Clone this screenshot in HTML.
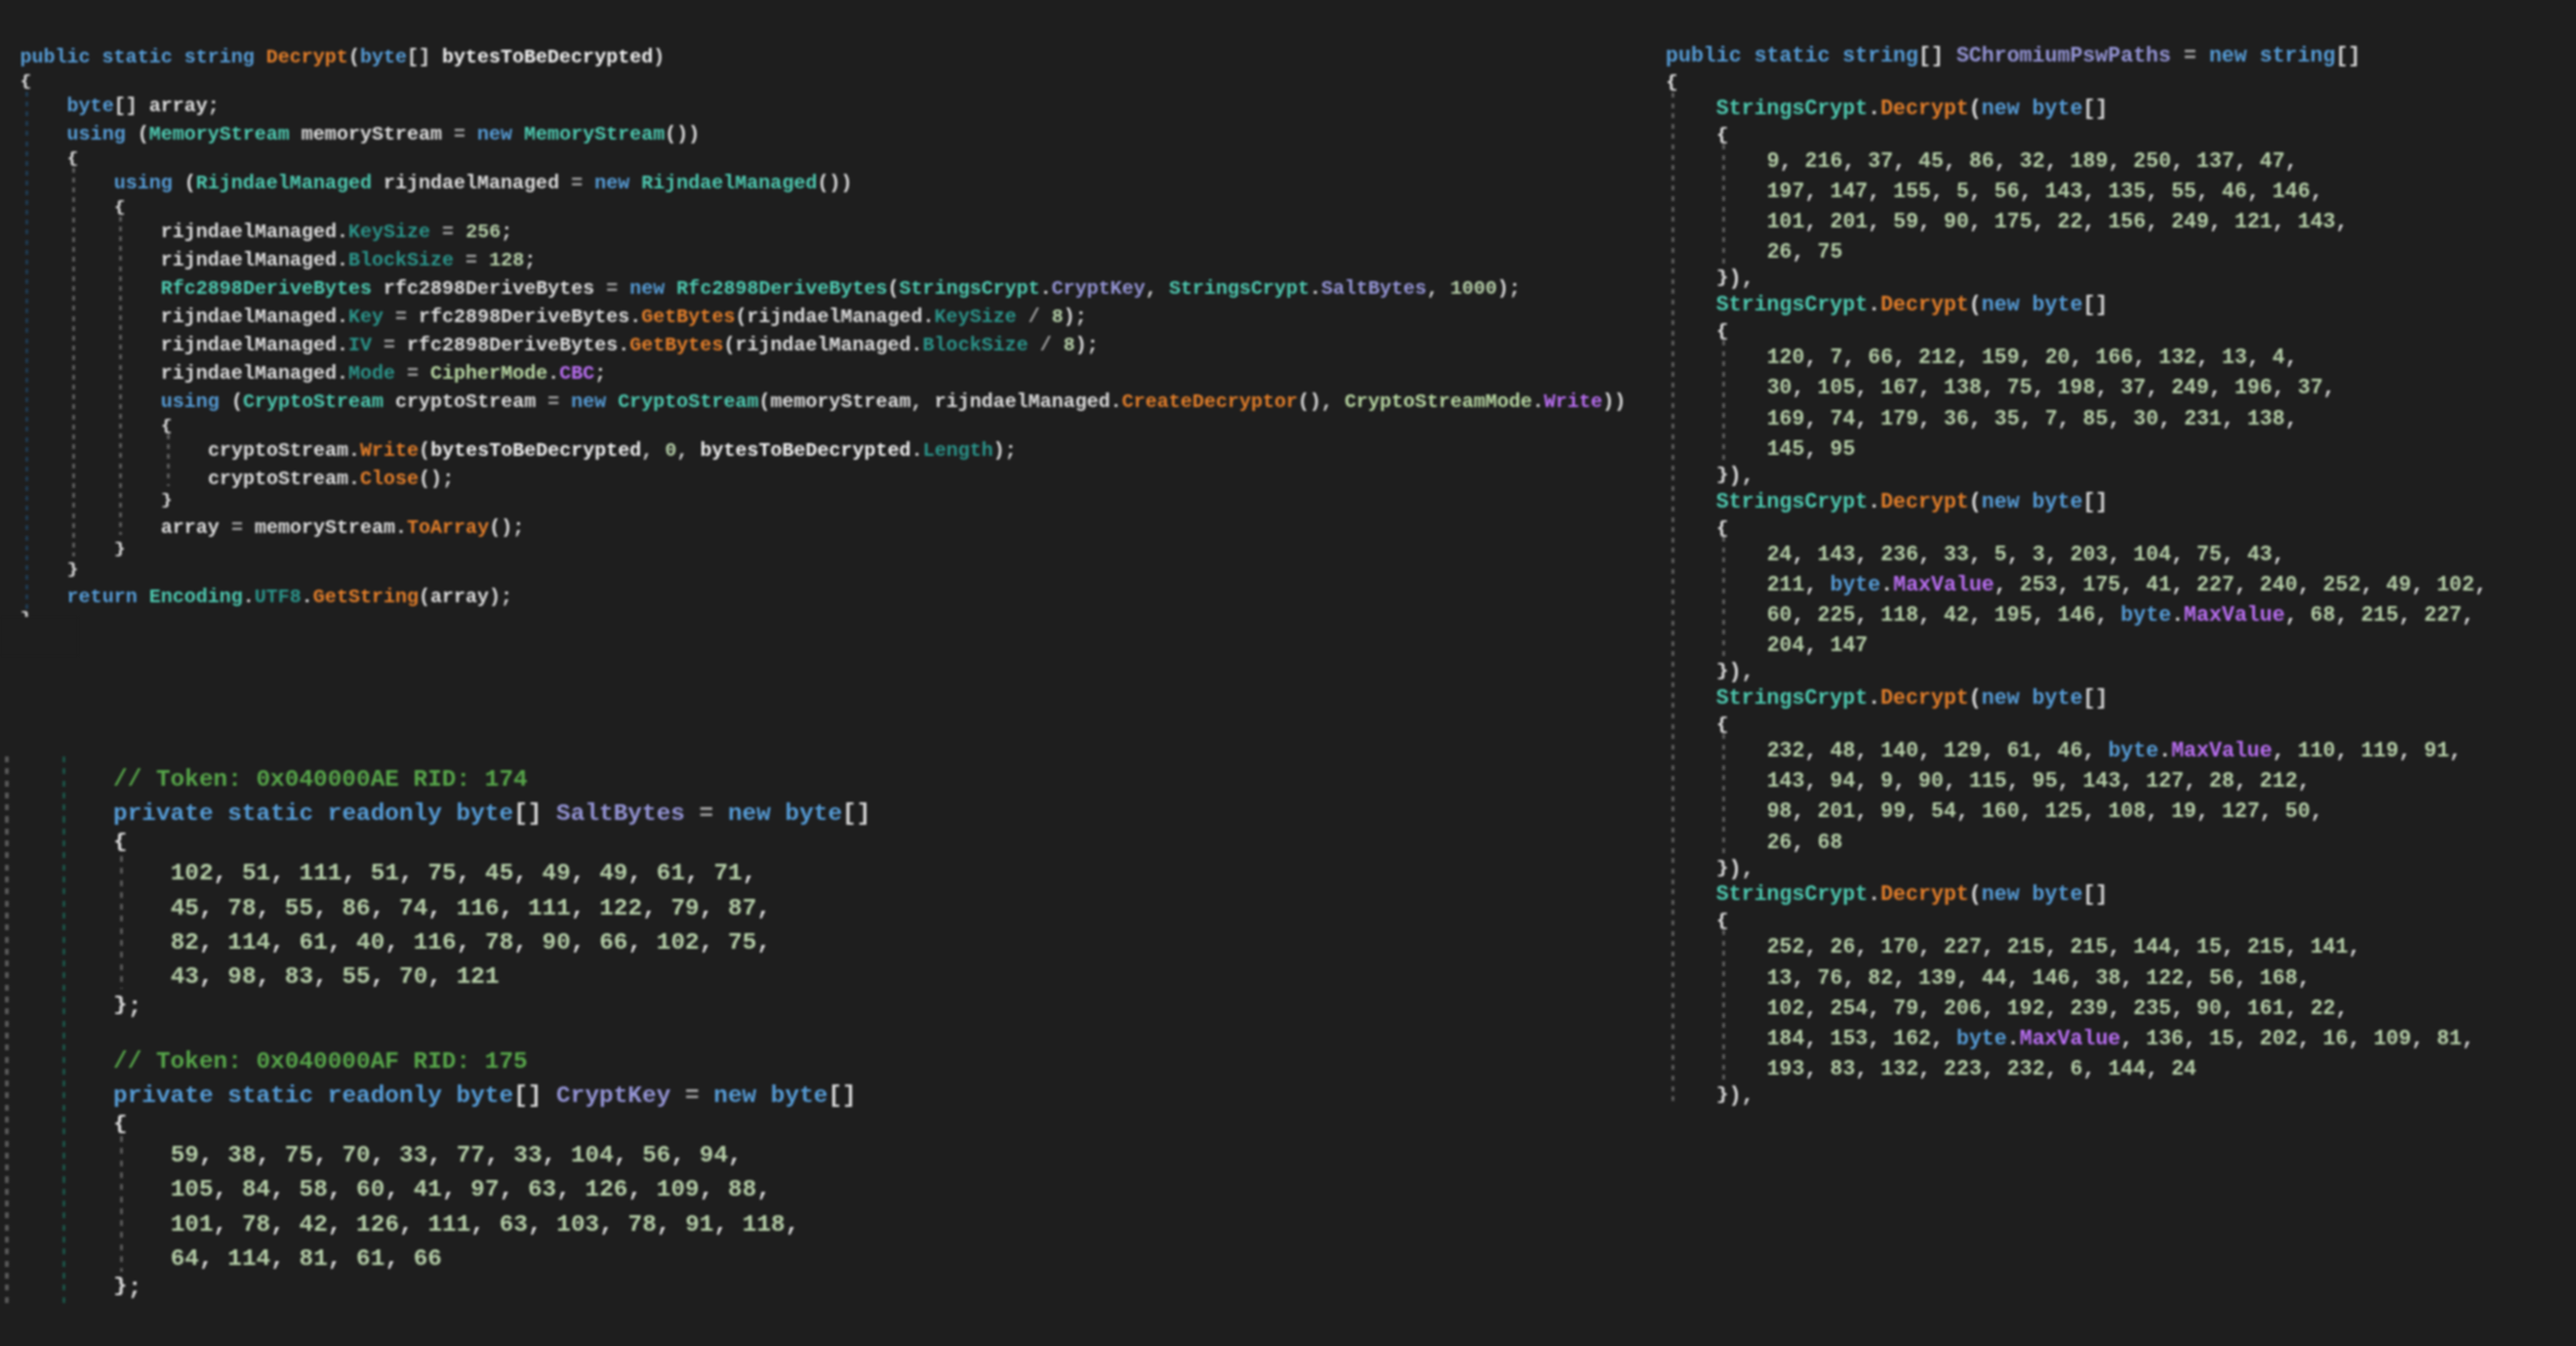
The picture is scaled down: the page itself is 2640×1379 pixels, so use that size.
<!DOCTYPE html><html><head><meta charset="utf-8"><style>
html,body{margin:0;padding:0;background:#1e1e1e;width:2640px;height:1379px;overflow:hidden}
#wrap{position:absolute;left:0;top:0;width:2640px;height:1379px;filter:blur(1px)}
.ln{position:absolute;white-space:pre;font-family:"Liberation Mono",monospace;color:#dcdcdc;font-weight:bold}
.g{position:absolute}
.br{display:inline-block;transform-origin:50% 46.6%}
.kw{color:#569cd6}.ty{color:#4ec9b0}.en{color:#b8d7a3}.me{color:#e27e2a}.pr{color:#2b948a}
.fi{color:#9494d4}.co{color:#b86ef0}.pa{color:#f0f0f0}.nu{color:#b5cea8}.op{color:#a8a8a8}
.id{color:#dcdcdc}.pu{color:#dcdcdc}.cm{color:#57a64a}
</style></head><body><div id="wrap">
<div class="g" style="left:26.21px;top:94.00px;height:530.00px;width:3.00px;background:repeating-linear-gradient(to bottom,#1f3a50 0,#1f3a50 5.00px,transparent 5.00px,transparent 10.10px)"></div>
<div class="g" style="left:74.31px;top:172.00px;height:398.00px;width:3.00px;background:repeating-linear-gradient(to bottom,#5c5c5c 0,#5c5c5c 5.00px,transparent 5.00px,transparent 10.10px)"></div>
<div class="g" style="left:122.42px;top:222.00px;height:326.00px;width:3.00px;background:repeating-linear-gradient(to bottom,#5c5c5c 0,#5c5c5c 5.00px,transparent 5.00px,transparent 10.10px)"></div>
<div class="g" style="left:170.52px;top:445.00px;height:53.00px;width:3.00px;background:repeating-linear-gradient(to bottom,#5c5c5c 0,#5c5c5c 5.00px,transparent 5.00px,transparent 10.10px)"></div>
<div class="g" style="left:5.43px;top:775.00px;height:561.00px;width:3.30px;background:repeating-linear-gradient(to bottom,#585858 0,#585858 6.00px,transparent 6.00px,transparent 12.30px)"></div>
<div class="g" style="left:64.07px;top:775.00px;height:561.00px;width:3.30px;background:repeating-linear-gradient(to bottom,#1c5246 0,#1c5246 6.00px,transparent 6.00px,transparent 12.30px)"></div>
<div class="g" style="left:122.71px;top:877.00px;height:136.00px;width:3.30px;background:repeating-linear-gradient(to bottom,#585858 0,#585858 6.00px,transparent 6.00px,transparent 12.30px)"></div>
<div class="g" style="left:122.71px;top:1164.00px;height:139.00px;width:3.30px;background:repeating-linear-gradient(to bottom,#585858 0,#585858 6.00px,transparent 6.00px,transparent 12.30px)"></div>
<div class="g" style="left:1713.07px;top:95.00px;height:1038.00px;width:2.90px;background:repeating-linear-gradient(to bottom,#5c5c5c 0,#5c5c5c 5.00px,transparent 5.00px,transparent 10.60px)"></div>
<div class="g" style="left:1764.91px;top:147.59px;height:122.72px;width:2.90px;background:repeating-linear-gradient(to bottom,#5c5c5c 0,#5c5c5c 5.00px,transparent 5.00px,transparent 10.60px)"></div>
<div class="g" style="left:1764.91px;top:349.00px;height:122.72px;width:2.90px;background:repeating-linear-gradient(to bottom,#5c5c5c 0,#5c5c5c 5.00px,transparent 5.00px,transparent 10.60px)"></div>
<div class="g" style="left:1764.91px;top:550.41px;height:122.72px;width:2.90px;background:repeating-linear-gradient(to bottom,#5c5c5c 0,#5c5c5c 5.00px,transparent 5.00px,transparent 10.60px)"></div>
<div class="g" style="left:1764.91px;top:751.82px;height:122.72px;width:2.90px;background:repeating-linear-gradient(to bottom,#5c5c5c 0,#5c5c5c 5.00px,transparent 5.00px,transparent 10.60px)"></div>
<div class="g" style="left:1764.91px;top:953.23px;height:153.86px;width:2.90px;background:repeating-linear-gradient(to bottom,#5c5c5c 0,#5c5c5c 5.00px,transparent 5.00px,transparent 10.60px)"></div>
<div class="ln" style="top:49.15px;left:20.50px;font-size:20.038px;line-height:20.038px"><span class="kw">public</span> <span class="kw">static</span> <span class="kw">string</span> <span class="me">Decrypt</span><span class="pu">(</span><span class="kw">byte</span><span class="pu">[]</span> <span class="pa">bytesToBeDecrypted</span><span class="pu">)</span></div>
<div class="ln" style="top:74.20px;left:20.50px;font-size:20.038px;line-height:20.038px"><span class="pu"><span class="br" style="transform:translateY(0.00px) scaleY(0.850)">{</span></span></div>
<div class="ln" style="top:99.24px;left:68.60px;font-size:20.038px;line-height:20.038px"><span class="kw">byte</span><span class="pu">[]</span> <span class="id">array</span><span class="pu">;</span></div>
<div class="ln" style="top:128.14px;left:68.60px;font-size:20.038px;line-height:20.038px"><span class="kw">using</span> <span class="pu">(</span><span class="ty">MemoryStream</span> <span class="id">memoryStream</span> <span class="op">=</span> <span class="kw">new</span> <span class="ty">MemoryStream</span><span class="pu">())</span></div>
<div class="ln" style="top:153.19px;left:68.60px;font-size:20.038px;line-height:20.038px"><span class="pu"><span class="br" style="transform:translateY(0.00px) scaleY(0.850)">{</span></span></div>
<div class="ln" style="top:178.24px;left:116.70px;font-size:20.038px;line-height:20.038px"><span class="kw">using</span> <span class="pu">(</span><span class="ty">RijndaelManaged</span> <span class="id">rijndaelManaged</span> <span class="op">=</span> <span class="kw">new</span> <span class="ty">RijndaelManaged</span><span class="pu">())</span></div>
<div class="ln" style="top:203.28px;left:116.70px;font-size:20.038px;line-height:20.038px"><span class="pu"><span class="br" style="transform:translateY(0.00px) scaleY(0.850)">{</span></span></div>
<div class="ln" style="top:228.33px;left:164.80px;font-size:20.038px;line-height:20.038px"><span class="id">rijndaelManaged</span><span class="pu">.</span><span class="pr">KeySize</span> <span class="op">=</span> <span class="nu">256</span><span class="pu">;</span></div>
<div class="ln" style="top:257.23px;left:164.80px;font-size:20.038px;line-height:20.038px"><span class="id">rijndaelManaged</span><span class="pu">.</span><span class="pr">BlockSize</span> <span class="op">=</span> <span class="nu">128</span><span class="pu">;</span></div>
<div class="ln" style="top:286.12px;left:164.80px;font-size:20.038px;line-height:20.038px"><span class="ty">Rfc2898DeriveBytes</span> <span class="id">rfc2898DeriveBytes</span> <span class="op">=</span> <span class="kw">new</span> <span class="ty">Rfc2898DeriveBytes</span><span class="pu">(</span><span class="ty">StringsCrypt</span><span class="pu">.</span><span class="fi">CryptKey</span><span class="pu">,</span> <span class="ty">StringsCrypt</span><span class="pu">.</span><span class="fi">SaltBytes</span><span class="pu">,</span> <span class="nu">1000</span><span class="pu">);</span></div>
<div class="ln" style="top:315.02px;left:164.80px;font-size:20.038px;line-height:20.038px"><span class="id">rijndaelManaged</span><span class="pu">.</span><span class="pr">Key</span> <span class="op">=</span> <span class="id">rfc2898DeriveBytes</span><span class="pu">.</span><span class="me">GetBytes</span><span class="pu">(</span><span class="id">rijndaelManaged</span><span class="pu">.</span><span class="pr">KeySize</span> <span class="op">/</span> <span class="nu">8</span><span class="pu">);</span></div>
<div class="ln" style="top:343.92px;left:164.80px;font-size:20.038px;line-height:20.038px"><span class="id">rijndaelManaged</span><span class="pu">.</span><span class="pr">IV</span> <span class="op">=</span> <span class="id">rfc2898DeriveBytes</span><span class="pu">.</span><span class="me">GetBytes</span><span class="pu">(</span><span class="id">rijndaelManaged</span><span class="pu">.</span><span class="pr">BlockSize</span> <span class="op">/</span> <span class="nu">8</span><span class="pu">);</span></div>
<div class="ln" style="top:372.81px;left:164.80px;font-size:20.038px;line-height:20.038px"><span class="id">rijndaelManaged</span><span class="pu">.</span><span class="pr">Mode</span> <span class="op">=</span> <span class="en">CipherMode</span><span class="pu">.</span><span class="co">CBC</span><span class="pu">;</span></div>
<div class="ln" style="top:401.71px;left:164.80px;font-size:20.038px;line-height:20.038px"><span class="kw">using</span> <span class="pu">(</span><span class="ty">CryptoStream</span> <span class="id">cryptoStream</span> <span class="op">=</span> <span class="kw">new</span> <span class="ty">CryptoStream</span><span class="pu">(</span><span class="id">memoryStream</span><span class="pu">,</span> <span class="id">rijndaelManaged</span><span class="pu">.</span><span class="me">CreateDecryptor</span><span class="pu">(),</span> <span class="en">CryptoStreamMode</span><span class="pu">.</span><span class="co">Write</span><span class="pu">))</span></div>
<div class="ln" style="top:426.76px;left:164.80px;font-size:20.038px;line-height:20.038px"><span class="pu"><span class="br" style="transform:translateY(0.00px) scaleY(0.850)">{</span></span></div>
<div class="ln" style="top:451.81px;left:212.90px;font-size:20.038px;line-height:20.038px"><span class="id">cryptoStream</span><span class="pu">.</span><span class="me">Write</span><span class="pu">(</span><span class="pa">bytesToBeDecrypted</span><span class="pu">,</span> <span class="nu">0</span><span class="pu">,</span> <span class="pa">bytesToBeDecrypted</span><span class="pu">.</span><span class="pr">Length</span><span class="pu">);</span></div>
<div class="ln" style="top:480.70px;left:212.90px;font-size:20.038px;line-height:20.038px"><span class="id">cryptoStream</span><span class="pu">.</span><span class="me">Close</span><span class="pu">();</span></div>
<div class="ln" style="top:505.75px;left:164.80px;font-size:20.038px;line-height:20.038px"><span class="pu"><span class="br" style="transform:translateY(-2.70px) scaleY(0.850)">}</span></span></div>
<div class="ln" style="top:530.80px;left:164.80px;font-size:20.038px;line-height:20.038px"><span class="id">array</span> <span class="op">=</span> <span class="id">memoryStream</span><span class="pu">.</span><span class="me">ToArray</span><span class="pu">();</span></div>
<div class="ln" style="top:555.85px;left:116.70px;font-size:20.038px;line-height:20.038px"><span class="pu"><span class="br" style="transform:translateY(-2.70px) scaleY(0.850)">}</span></span></div>
<div class="ln" style="top:577.05px;left:68.60px;font-size:20.038px;line-height:20.038px"><span class="pu"><span class="br" style="transform:translateY(-2.70px) scaleY(0.850)">}</span></span></div>
<div class="ln" style="top:602.09px;left:68.60px;font-size:20.038px;line-height:20.038px"><span class="kw">return</span> <span class="ty">Encoding</span><span class="pu">.</span><span class="pr">UTF8</span><span class="pu">.</span><span class="me">GetString</span><span class="pu">(</span><span class="id">array</span><span class="pu">);</span></div>
<div class="ln" style="top:627.14px;left:20.50px;font-size:20.038px;line-height:20.038px"><span class="pu"><span class="br" style="transform:translateY(-2.70px) scaleY(0.850)">}</span></span></div>
<div class="ln" style="top:786.98px;left:116.00px;font-size:24.429px;line-height:24.429px"><span class="cm">// Token: 0x040000AE RID: 174</span></div>
<div class="ln" style="top:822.21px;left:116.00px;font-size:24.429px;line-height:24.429px"><span class="kw">private</span> <span class="kw">static</span> <span class="kw">readonly</span> <span class="kw">byte</span><span class="pu">[]</span> <span class="fi">SaltBytes</span> <span class="op">=</span> <span class="kw">new</span> <span class="kw">byte</span><span class="pu">[]</span></div>
<div class="ln" style="top:852.75px;left:116.00px;font-size:24.429px;line-height:24.429px"><span class="pu"><span class="br" style="transform:translateY(-2.10px) scaleY(0.850)">{</span></span></div>
<div class="ln" style="top:883.29px;left:174.64px;font-size:24.429px;line-height:24.429px"><span class="nu">102</span><span class="pu">,</span> <span class="nu">51</span><span class="pu">,</span> <span class="nu">111</span><span class="pu">,</span> <span class="nu">51</span><span class="pu">,</span> <span class="nu">75</span><span class="pu">,</span> <span class="nu">45</span><span class="pu">,</span> <span class="nu">49</span><span class="pu">,</span> <span class="nu">49</span><span class="pu">,</span> <span class="nu">61</span><span class="pu">,</span> <span class="nu">71</span><span class="pu">,</span></div>
<div class="ln" style="top:918.51px;left:174.64px;font-size:24.429px;line-height:24.429px"><span class="nu">45</span><span class="pu">,</span> <span class="nu">78</span><span class="pu">,</span> <span class="nu">55</span><span class="pu">,</span> <span class="nu">86</span><span class="pu">,</span> <span class="nu">74</span><span class="pu">,</span> <span class="nu">116</span><span class="pu">,</span> <span class="nu">111</span><span class="pu">,</span> <span class="nu">122</span><span class="pu">,</span> <span class="nu">79</span><span class="pu">,</span> <span class="nu">87</span><span class="pu">,</span></div>
<div class="ln" style="top:953.74px;left:174.64px;font-size:24.429px;line-height:24.429px"><span class="nu">82</span><span class="pu">,</span> <span class="nu">114</span><span class="pu">,</span> <span class="nu">61</span><span class="pu">,</span> <span class="nu">40</span><span class="pu">,</span> <span class="nu">116</span><span class="pu">,</span> <span class="nu">78</span><span class="pu">,</span> <span class="nu">90</span><span class="pu">,</span> <span class="nu">66</span><span class="pu">,</span> <span class="nu">102</span><span class="pu">,</span> <span class="nu">75</span><span class="pu">,</span></div>
<div class="ln" style="top:988.97px;left:174.64px;font-size:24.429px;line-height:24.429px"><span class="nu">43</span><span class="pu">,</span> <span class="nu">98</span><span class="pu">,</span> <span class="nu">83</span><span class="pu">,</span> <span class="nu">55</span><span class="pu">,</span> <span class="nu">70</span><span class="pu">,</span> <span class="nu">121</span></div>
<div class="ln" style="top:1019.51px;left:116.00px;font-size:24.429px;line-height:24.429px"><span class="pu"><span class="br" style="transform:translateY(-1.95px) scaleY(0.850)">}</span>;</span></div>
<div class="ln" style="top:1075.89px;left:116.00px;font-size:24.429px;line-height:24.429px"><span class="cm">// Token: 0x040000AF RID: 175</span></div>
<div class="ln" style="top:1111.12px;left:116.00px;font-size:24.429px;line-height:24.429px"><span class="kw">private</span> <span class="kw">static</span> <span class="kw">readonly</span> <span class="kw">byte</span><span class="pu">[]</span> <span class="fi">CryptKey</span> <span class="op">=</span> <span class="kw">new</span> <span class="kw">byte</span><span class="pu">[]</span></div>
<div class="ln" style="top:1141.65px;left:116.00px;font-size:24.429px;line-height:24.429px"><span class="pu"><span class="br" style="transform:translateY(-2.10px) scaleY(0.850)">{</span></span></div>
<div class="ln" style="top:1172.19px;left:174.64px;font-size:24.429px;line-height:24.429px"><span class="nu">59</span><span class="pu">,</span> <span class="nu">38</span><span class="pu">,</span> <span class="nu">75</span><span class="pu">,</span> <span class="nu">70</span><span class="pu">,</span> <span class="nu">33</span><span class="pu">,</span> <span class="nu">77</span><span class="pu">,</span> <span class="nu">33</span><span class="pu">,</span> <span class="nu">104</span><span class="pu">,</span> <span class="nu">56</span><span class="pu">,</span> <span class="nu">94</span><span class="pu">,</span></div>
<div class="ln" style="top:1207.42px;left:174.64px;font-size:24.429px;line-height:24.429px"><span class="nu">105</span><span class="pu">,</span> <span class="nu">84</span><span class="pu">,</span> <span class="nu">58</span><span class="pu">,</span> <span class="nu">60</span><span class="pu">,</span> <span class="nu">41</span><span class="pu">,</span> <span class="nu">97</span><span class="pu">,</span> <span class="nu">63</span><span class="pu">,</span> <span class="nu">126</span><span class="pu">,</span> <span class="nu">109</span><span class="pu">,</span> <span class="nu">88</span><span class="pu">,</span></div>
<div class="ln" style="top:1242.65px;left:174.64px;font-size:24.429px;line-height:24.429px"><span class="nu">101</span><span class="pu">,</span> <span class="nu">78</span><span class="pu">,</span> <span class="nu">42</span><span class="pu">,</span> <span class="nu">126</span><span class="pu">,</span> <span class="nu">111</span><span class="pu">,</span> <span class="nu">63</span><span class="pu">,</span> <span class="nu">103</span><span class="pu">,</span> <span class="nu">78</span><span class="pu">,</span> <span class="nu">91</span><span class="pu">,</span> <span class="nu">118</span><span class="pu">,</span></div>
<div class="ln" style="top:1277.87px;left:174.64px;font-size:24.429px;line-height:24.429px"><span class="nu">64</span><span class="pu">,</span> <span class="nu">114</span><span class="pu">,</span> <span class="nu">81</span><span class="pu">,</span> <span class="nu">61</span><span class="pu">,</span> <span class="nu">66</span></div>
<div class="ln" style="top:1308.41px;left:116.00px;font-size:24.429px;line-height:24.429px"><span class="pu"><span class="br" style="transform:translateY(-1.95px) scaleY(0.850)">}</span>;</span></div>
<div class="ln" style="top:46.85px;left:1707.00px;font-size:21.596px;line-height:21.596px"><span class="kw">public</span> <span class="kw">static</span> <span class="kw">string</span><span class="pu">[]</span> <span class="fi">SChromiumPswPaths</span> <span class="op">=</span> <span class="kw">new</span> <span class="kw">string</span><span class="pu">[]</span></div>
<div class="ln" style="top:73.85px;left:1707.00px;font-size:21.596px;line-height:21.596px"><span class="pu"><span class="br" style="transform:translateY(-0.46px) scaleY(0.850)">{</span></span></div>
<div class="ln" style="top:100.85px;left:1758.84px;font-size:21.596px;line-height:21.596px"><span class="ty">StringsCrypt</span><span class="pu">.</span><span class="me">Decrypt</span><span class="pu">(</span><span class="kw">new</span> <span class="kw">byte</span><span class="pu">[]</span></div>
<div class="ln" style="top:127.84px;left:1758.84px;font-size:21.596px;line-height:21.596px"><span class="pu"><span class="br" style="transform:translateY(-0.46px) scaleY(0.850)">{</span></span></div>
<div class="ln" style="top:154.84px;left:1810.68px;font-size:21.596px;line-height:21.596px"><span class="nu">9</span><span class="pu">,</span> <span class="nu">216</span><span class="pu">,</span> <span class="nu">37</span><span class="pu">,</span> <span class="nu">45</span><span class="pu">,</span> <span class="nu">86</span><span class="pu">,</span> <span class="nu">32</span><span class="pu">,</span> <span class="nu">189</span><span class="pu">,</span> <span class="nu">250</span><span class="pu">,</span> <span class="nu">137</span><span class="pu">,</span> <span class="nu">47</span><span class="pu">,</span></div>
<div class="ln" style="top:185.98px;left:1810.68px;font-size:21.596px;line-height:21.596px"><span class="nu">197</span><span class="pu">,</span> <span class="nu">147</span><span class="pu">,</span> <span class="nu">155</span><span class="pu">,</span> <span class="nu">5</span><span class="pu">,</span> <span class="nu">56</span><span class="pu">,</span> <span class="nu">143</span><span class="pu">,</span> <span class="nu">135</span><span class="pu">,</span> <span class="nu">55</span><span class="pu">,</span> <span class="nu">46</span><span class="pu">,</span> <span class="nu">146</span><span class="pu">,</span></div>
<div class="ln" style="top:217.12px;left:1810.68px;font-size:21.596px;line-height:21.596px"><span class="nu">101</span><span class="pu">,</span> <span class="nu">201</span><span class="pu">,</span> <span class="nu">59</span><span class="pu">,</span> <span class="nu">90</span><span class="pu">,</span> <span class="nu">175</span><span class="pu">,</span> <span class="nu">22</span><span class="pu">,</span> <span class="nu">156</span><span class="pu">,</span> <span class="nu">249</span><span class="pu">,</span> <span class="nu">121</span><span class="pu">,</span> <span class="nu">143</span><span class="pu">,</span></div>
<div class="ln" style="top:248.27px;left:1810.68px;font-size:21.596px;line-height:21.596px"><span class="nu">26</span><span class="pu">,</span> <span class="nu">75</span></div>
<div class="ln" style="top:275.26px;left:1758.84px;font-size:21.596px;line-height:21.596px"><span class="pu"><span class="br" style="transform:translateY(-0.90px) scaleY(0.850)">}</span>),</span></div>
<div class="ln" style="top:302.26px;left:1758.84px;font-size:21.596px;line-height:21.596px"><span class="ty">StringsCrypt</span><span class="pu">.</span><span class="me">Decrypt</span><span class="pu">(</span><span class="kw">new</span> <span class="kw">byte</span><span class="pu">[]</span></div>
<div class="ln" style="top:329.25px;left:1758.84px;font-size:21.596px;line-height:21.596px"><span class="pu"><span class="br" style="transform:translateY(-0.46px) scaleY(0.850)">{</span></span></div>
<div class="ln" style="top:356.25px;left:1810.68px;font-size:21.596px;line-height:21.596px"><span class="nu">120</span><span class="pu">,</span> <span class="nu">7</span><span class="pu">,</span> <span class="nu">66</span><span class="pu">,</span> <span class="nu">212</span><span class="pu">,</span> <span class="nu">159</span><span class="pu">,</span> <span class="nu">20</span><span class="pu">,</span> <span class="nu">166</span><span class="pu">,</span> <span class="nu">132</span><span class="pu">,</span> <span class="nu">13</span><span class="pu">,</span> <span class="nu">4</span><span class="pu">,</span></div>
<div class="ln" style="top:387.39px;left:1810.68px;font-size:21.596px;line-height:21.596px"><span class="nu">30</span><span class="pu">,</span> <span class="nu">105</span><span class="pu">,</span> <span class="nu">167</span><span class="pu">,</span> <span class="nu">138</span><span class="pu">,</span> <span class="nu">75</span><span class="pu">,</span> <span class="nu">198</span><span class="pu">,</span> <span class="nu">37</span><span class="pu">,</span> <span class="nu">249</span><span class="pu">,</span> <span class="nu">196</span><span class="pu">,</span> <span class="nu">37</span><span class="pu">,</span></div>
<div class="ln" style="top:418.53px;left:1810.68px;font-size:21.596px;line-height:21.596px"><span class="nu">169</span><span class="pu">,</span> <span class="nu">74</span><span class="pu">,</span> <span class="nu">179</span><span class="pu">,</span> <span class="nu">36</span><span class="pu">,</span> <span class="nu">35</span><span class="pu">,</span> <span class="nu">7</span><span class="pu">,</span> <span class="nu">85</span><span class="pu">,</span> <span class="nu">30</span><span class="pu">,</span> <span class="nu">231</span><span class="pu">,</span> <span class="nu">138</span><span class="pu">,</span></div>
<div class="ln" style="top:449.68px;left:1810.68px;font-size:21.596px;line-height:21.596px"><span class="nu">145</span><span class="pu">,</span> <span class="nu">95</span></div>
<div class="ln" style="top:476.67px;left:1758.84px;font-size:21.596px;line-height:21.596px"><span class="pu"><span class="br" style="transform:translateY(-0.90px) scaleY(0.850)">}</span>),</span></div>
<div class="ln" style="top:503.67px;left:1758.84px;font-size:21.596px;line-height:21.596px"><span class="ty">StringsCrypt</span><span class="pu">.</span><span class="me">Decrypt</span><span class="pu">(</span><span class="kw">new</span> <span class="kw">byte</span><span class="pu">[]</span></div>
<div class="ln" style="top:530.66px;left:1758.84px;font-size:21.596px;line-height:21.596px"><span class="pu"><span class="br" style="transform:translateY(-0.46px) scaleY(0.850)">{</span></span></div>
<div class="ln" style="top:557.66px;left:1810.68px;font-size:21.596px;line-height:21.596px"><span class="nu">24</span><span class="pu">,</span> <span class="nu">143</span><span class="pu">,</span> <span class="nu">236</span><span class="pu">,</span> <span class="nu">33</span><span class="pu">,</span> <span class="nu">5</span><span class="pu">,</span> <span class="nu">3</span><span class="pu">,</span> <span class="nu">203</span><span class="pu">,</span> <span class="nu">104</span><span class="pu">,</span> <span class="nu">75</span><span class="pu">,</span> <span class="nu">43</span><span class="pu">,</span></div>
<div class="ln" style="top:588.80px;left:1810.68px;font-size:21.596px;line-height:21.596px"><span class="nu">211</span><span class="pu">,</span> <span class="kw">byte</span><span class="pu">.</span><span class="co">MaxValue</span><span class="pu">,</span> <span class="nu">253</span><span class="pu">,</span> <span class="nu">175</span><span class="pu">,</span> <span class="nu">41</span><span class="pu">,</span> <span class="nu">227</span><span class="pu">,</span> <span class="nu">240</span><span class="pu">,</span> <span class="nu">252</span><span class="pu">,</span> <span class="nu">49</span><span class="pu">,</span> <span class="nu">102</span><span class="pu">,</span></div>
<div class="ln" style="top:619.95px;left:1810.68px;font-size:21.596px;line-height:21.596px"><span class="nu">60</span><span class="pu">,</span> <span class="nu">225</span><span class="pu">,</span> <span class="nu">118</span><span class="pu">,</span> <span class="nu">42</span><span class="pu">,</span> <span class="nu">195</span><span class="pu">,</span> <span class="nu">146</span><span class="pu">,</span> <span class="kw">byte</span><span class="pu">.</span><span class="co">MaxValue</span><span class="pu">,</span> <span class="nu">68</span><span class="pu">,</span> <span class="nu">215</span><span class="pu">,</span> <span class="nu">227</span><span class="pu">,</span></div>
<div class="ln" style="top:651.09px;left:1810.68px;font-size:21.596px;line-height:21.596px"><span class="nu">204</span><span class="pu">,</span> <span class="nu">147</span></div>
<div class="ln" style="top:678.08px;left:1758.84px;font-size:21.596px;line-height:21.596px"><span class="pu"><span class="br" style="transform:translateY(-0.90px) scaleY(0.850)">}</span>),</span></div>
<div class="ln" style="top:705.08px;left:1758.84px;font-size:21.596px;line-height:21.596px"><span class="ty">StringsCrypt</span><span class="pu">.</span><span class="me">Decrypt</span><span class="pu">(</span><span class="kw">new</span> <span class="kw">byte</span><span class="pu">[]</span></div>
<div class="ln" style="top:732.08px;left:1758.84px;font-size:21.596px;line-height:21.596px"><span class="pu"><span class="br" style="transform:translateY(-0.46px) scaleY(0.850)">{</span></span></div>
<div class="ln" style="top:759.07px;left:1810.68px;font-size:21.596px;line-height:21.596px"><span class="nu">232</span><span class="pu">,</span> <span class="nu">48</span><span class="pu">,</span> <span class="nu">140</span><span class="pu">,</span> <span class="nu">129</span><span class="pu">,</span> <span class="nu">61</span><span class="pu">,</span> <span class="nu">46</span><span class="pu">,</span> <span class="kw">byte</span><span class="pu">.</span><span class="co">MaxValue</span><span class="pu">,</span> <span class="nu">110</span><span class="pu">,</span> <span class="nu">119</span><span class="pu">,</span> <span class="nu">91</span><span class="pu">,</span></div>
<div class="ln" style="top:790.21px;left:1810.68px;font-size:21.596px;line-height:21.596px"><span class="nu">143</span><span class="pu">,</span> <span class="nu">94</span><span class="pu">,</span> <span class="nu">9</span><span class="pu">,</span> <span class="nu">90</span><span class="pu">,</span> <span class="nu">115</span><span class="pu">,</span> <span class="nu">95</span><span class="pu">,</span> <span class="nu">143</span><span class="pu">,</span> <span class="nu">127</span><span class="pu">,</span> <span class="nu">28</span><span class="pu">,</span> <span class="nu">212</span><span class="pu">,</span></div>
<div class="ln" style="top:821.36px;left:1810.68px;font-size:21.596px;line-height:21.596px"><span class="nu">98</span><span class="pu">,</span> <span class="nu">201</span><span class="pu">,</span> <span class="nu">99</span><span class="pu">,</span> <span class="nu">54</span><span class="pu">,</span> <span class="nu">160</span><span class="pu">,</span> <span class="nu">125</span><span class="pu">,</span> <span class="nu">108</span><span class="pu">,</span> <span class="nu">19</span><span class="pu">,</span> <span class="nu">127</span><span class="pu">,</span> <span class="nu">50</span><span class="pu">,</span></div>
<div class="ln" style="top:852.50px;left:1810.68px;font-size:21.596px;line-height:21.596px"><span class="nu">26</span><span class="pu">,</span> <span class="nu">68</span></div>
<div class="ln" style="top:879.50px;left:1758.84px;font-size:21.596px;line-height:21.596px"><span class="pu"><span class="br" style="transform:translateY(-0.90px) scaleY(0.850)">}</span>),</span></div>
<div class="ln" style="top:906.49px;left:1758.84px;font-size:21.596px;line-height:21.596px"><span class="ty">StringsCrypt</span><span class="pu">.</span><span class="me">Decrypt</span><span class="pu">(</span><span class="kw">new</span> <span class="kw">byte</span><span class="pu">[]</span></div>
<div class="ln" style="top:933.49px;left:1758.84px;font-size:21.596px;line-height:21.596px"><span class="pu"><span class="br" style="transform:translateY(-0.46px) scaleY(0.850)">{</span></span></div>
<div class="ln" style="top:960.48px;left:1810.68px;font-size:21.596px;line-height:21.596px"><span class="nu">252</span><span class="pu">,</span> <span class="nu">26</span><span class="pu">,</span> <span class="nu">170</span><span class="pu">,</span> <span class="nu">227</span><span class="pu">,</span> <span class="nu">215</span><span class="pu">,</span> <span class="nu">215</span><span class="pu">,</span> <span class="nu">144</span><span class="pu">,</span> <span class="nu">15</span><span class="pu">,</span> <span class="nu">215</span><span class="pu">,</span> <span class="nu">141</span><span class="pu">,</span></div>
<div class="ln" style="top:991.63px;left:1810.68px;font-size:21.596px;line-height:21.596px"><span class="nu">13</span><span class="pu">,</span> <span class="nu">76</span><span class="pu">,</span> <span class="nu">82</span><span class="pu">,</span> <span class="nu">139</span><span class="pu">,</span> <span class="nu">44</span><span class="pu">,</span> <span class="nu">146</span><span class="pu">,</span> <span class="nu">38</span><span class="pu">,</span> <span class="nu">122</span><span class="pu">,</span> <span class="nu">56</span><span class="pu">,</span> <span class="nu">168</span><span class="pu">,</span></div>
<div class="ln" style="top:1022.77px;left:1810.68px;font-size:21.596px;line-height:21.596px"><span class="nu">102</span><span class="pu">,</span> <span class="nu">254</span><span class="pu">,</span> <span class="nu">79</span><span class="pu">,</span> <span class="nu">206</span><span class="pu">,</span> <span class="nu">192</span><span class="pu">,</span> <span class="nu">239</span><span class="pu">,</span> <span class="nu">235</span><span class="pu">,</span> <span class="nu">90</span><span class="pu">,</span> <span class="nu">161</span><span class="pu">,</span> <span class="nu">22</span><span class="pu">,</span></div>
<div class="ln" style="top:1053.91px;left:1810.68px;font-size:21.596px;line-height:21.596px"><span class="nu">184</span><span class="pu">,</span> <span class="nu">153</span><span class="pu">,</span> <span class="nu">162</span><span class="pu">,</span> <span class="kw">byte</span><span class="pu">.</span><span class="co">MaxValue</span><span class="pu">,</span> <span class="nu">136</span><span class="pu">,</span> <span class="nu">15</span><span class="pu">,</span> <span class="nu">202</span><span class="pu">,</span> <span class="nu">16</span><span class="pu">,</span> <span class="nu">109</span><span class="pu">,</span> <span class="nu">81</span><span class="pu">,</span></div>
<div class="ln" style="top:1085.05px;left:1810.68px;font-size:21.596px;line-height:21.596px"><span class="nu">193</span><span class="pu">,</span> <span class="nu">83</span><span class="pu">,</span> <span class="nu">132</span><span class="pu">,</span> <span class="nu">223</span><span class="pu">,</span> <span class="nu">232</span><span class="pu">,</span> <span class="nu">6</span><span class="pu">,</span> <span class="nu">144</span><span class="pu">,</span> <span class="nu">24</span></div>
<div class="ln" style="top:1112.05px;left:1758.84px;font-size:21.596px;line-height:21.596px"><span class="pu"><span class="br" style="transform:translateY(-0.90px) scaleY(0.850)">}</span>),</span></div>
<div style="position:absolute;left:0;top:632px;width:80px;height:40px;background:#1e1e1e"></div>
</div></body></html>
